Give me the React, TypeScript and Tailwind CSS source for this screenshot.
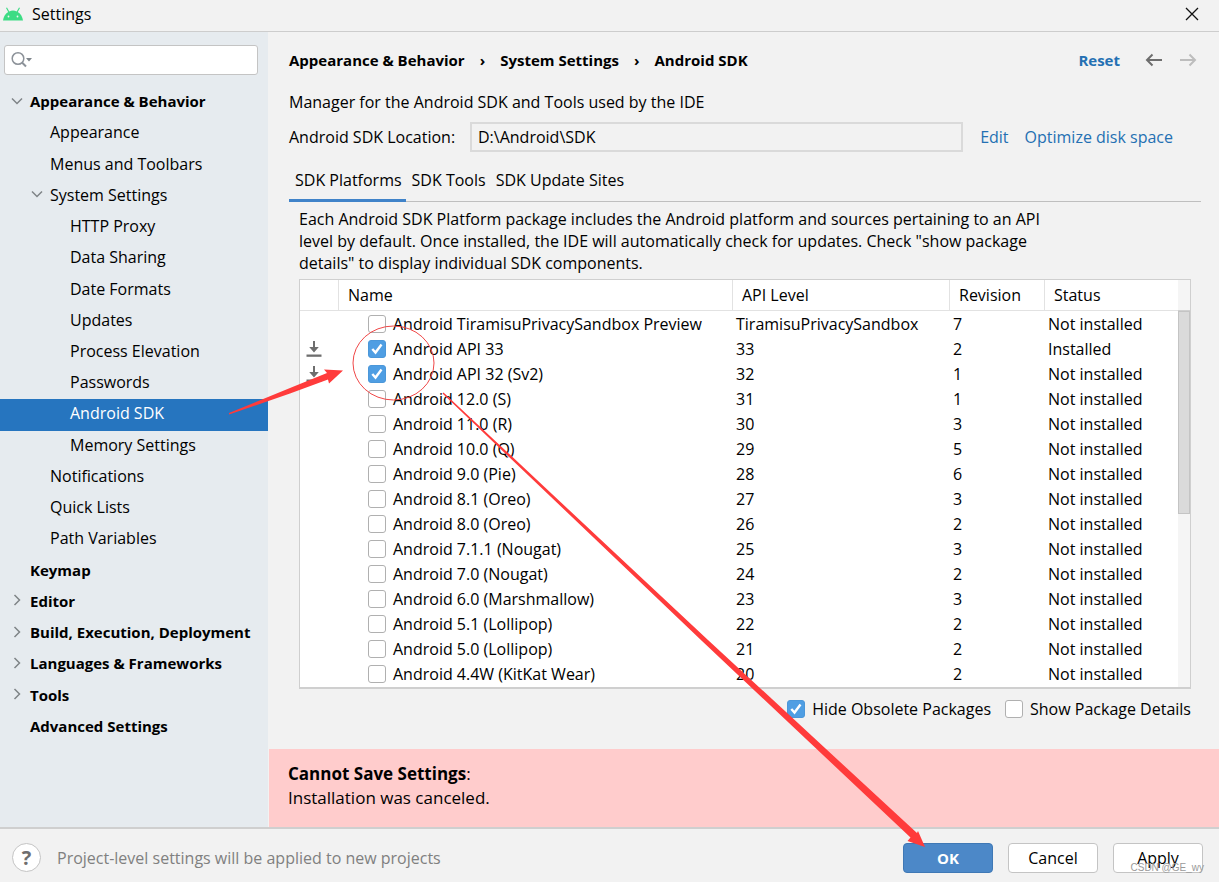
import { useState } from 'react';
import clsx from 'clsx';

interface TreeNode {
    label: string;
    level: 0 | 1 | 2;
    state?: 'open' | 'closed';
}

interface SdkPackage {
    name: string;
    api: string;
    revision: number;
    status: string;
    checked?: boolean;
}

const TREE: TreeNode[] = [
    { label: 'Appearance & Behavior', level: 0, state: 'open' },
    { label: 'Appearance', level: 1 },
    { label: 'Menus and Toolbars', level: 1 },
    { label: 'System Settings', level: 1, state: 'open' },
    { label: 'HTTP Proxy', level: 2 },
    { label: 'Data Sharing', level: 2 },
    { label: 'Date Formats', level: 2 },
    { label: 'Updates', level: 2 },
    { label: 'Process Elevation', level: 2 },
    { label: 'Passwords', level: 2 },
    { label: 'Android SDK', level: 2 },
    { label: 'Memory Settings', level: 2 },
    { label: 'Notifications', level: 1 },
    { label: 'Quick Lists', level: 1 },
    { label: 'Path Variables', level: 1 },
    { label: 'Keymap', level: 0 },
    { label: 'Editor', level: 0, state: 'closed' },
    { label: 'Build, Execution, Deployment', level: 0, state: 'closed' },
    { label: 'Languages & Frameworks', level: 0, state: 'closed' },
    { label: 'Tools', level: 0, state: 'closed' },
    { label: 'Advanced Settings', level: 0 },
];

const PACKAGES: SdkPackage[] = [
    { name: 'Android TiramisuPrivacySandbox Preview', api: 'TiramisuPrivacySandbox', revision: 7, status: 'Not installed' },
    { name: 'Android API 33', api: '33', revision: 2, status: 'Installed', checked: true },
    { name: 'Android API 32 (Sv2)', api: '32', revision: 1, status: 'Not installed', checked: true },
    { name: 'Android 12.0 (S)', api: '31', revision: 1, status: 'Not installed' },
    { name: 'Android 11.0 (R)', api: '30', revision: 3, status: 'Not installed' },
    { name: 'Android 10.0 (Q)', api: '29', revision: 5, status: 'Not installed' },
    { name: 'Android 9.0 (Pie)', api: '28', revision: 6, status: 'Not installed' },
    { name: 'Android 8.1 (Oreo)', api: '27', revision: 3, status: 'Not installed' },
    { name: 'Android 8.0 (Oreo)', api: '26', revision: 2, status: 'Not installed' },
    { name: 'Android 7.1.1 (Nougat)', api: '25', revision: 3, status: 'Not installed' },
    { name: 'Android 7.0 (Nougat)', api: '24', revision: 2, status: 'Not installed' },
    { name: 'Android 6.0 (Marshmallow)', api: '23', revision: 3, status: 'Not installed' },
    { name: 'Android 5.1 (Lollipop)', api: '22', revision: 2, status: 'Not installed' },
    { name: 'Android 5.0 (Lollipop)', api: '21', revision: 2, status: 'Not installed' },
    { name: 'Android 4.4W (KitKat Wear)', api: '20', revision: 2, status: 'Not installed' },
];

const TABS = ['SDK Platforms', 'SDK Tools', 'SDK Update Sites'];

const INDENT = ['pl-[30px]', 'pl-[50px]', 'pl-[70px]'];
const CHEVRON_LEFT = ['left-[10px]', 'left-[30px]', 'left-[50px]'];

const AndroidLogo = () => (
    <svg width="20" height="14" viewBox="0 0 20 14" aria-hidden="true">
        <path d="M0 13.5C.4 9.700 2.300 6.600 5.200 4.900L3 1l1-.6 2.300 4C7.500 3.900 8.700 3.600 10 3.600s2.500.3 3.700.8l2.300-4 1 .6-2.200 3.900c2.900 1.700 4.800 4.800 5.200 8.600z" fill="#3ddc84" />
        <circle cx="5.500" cy="9.500" r=".9" fill="#f2f2f2" />
        <circle cx="14.500" cy="9.500" r=".9" fill="#f2f2f2" />
    </svg>
);

const Chevron = ({ open }: { open: boolean }) => (
    <svg width="14" height="14" viewBox="0 0 14 14" fill="none" stroke="#7f8487" strokeWidth="1.500" aria-hidden="true">
        <path d={open ? 'M2 4.500l5 5 5-5' : 'M4.500 2l5 5-5 5'} />
    </svg>
);

const CheckBox = ({ label, defaultChecked, className }: { label: string, defaultChecked?: boolean, className?: string }) => (
    <label className={clsx('flex items-center', className)}>
        <span className="relative size-[18px] shrink-0">
            <input
                type="checkbox"
                defaultChecked={defaultChecked}
                className="peer block size-[18px] appearance-none rounded-[3px] border border-[#b0b0b0] bg-white checked:border-[#4b97d9] checked:bg-[#4f9ee3]"
            />
            <svg className="pointer-events-none absolute inset-0 hidden peer-checked:block" width="18" height="18" viewBox="0 0 18 18" fill="none" stroke="#fff" strokeWidth="2.400" aria-hidden="true">
                <path d="M4.300 9l3.200 3.500L13.500 4.500" />
            </svg>
        </span>
        <span className="whitespace-nowrap">{label}</span>
    </label>
);

const DownloadIcon = () => (
    <svg className="ml-[6px]" width="16" height="17" viewBox="0 0 16 17" fill="#6e6e6e" aria-hidden="true">
        <path d="M7 1h2v6h3.800L8 12.500 3.200 7H7z" />
        <path d="M.5 14.500h15v2.300H.5z" />
    </svg>
);

// Red marker drawn over the dialog: circle plus two arrows
const Annotations = () => (
    <svg className="pointer-events-none absolute top-0 left-0" width="1219" height="882" viewBox="0 0 1219 882" fill="#ff3b3b" aria-hidden="true">
        <ellipse cx="393.500" cy="363" rx="40.500" ry="37" fill="none" stroke="#f04848" />
        <path d="M229 413l61-25 37-15-3-3.500 19 1-14 13-1-4-38 14-61 21z" />
        <path d="M442.500 393.500l1-1L708 640l209 193 1-2 7 16-17.500-6 3-3.500L702 641z" />
    </svg>
);

function Sidebar() {
    const [selected, setSelected] = useState('Android SDK');

    return (
        <aside className="w-[268px] shrink-0 bg-[#e6ebef] pt-[13px]">
            <div className="relative mr-[10px] ml-1">
                <input
                    type="text"
                    aria-label="Search settings"
                    className="block h-[30px] w-full rounded-[3px] border border-[#c4c4c4] bg-white pr-2 pl-8 outline-none"
                />
                <svg className="pointer-events-none absolute top-[6px] left-[7px]" width="22" height="18" viewBox="0 0 22 18" fill="none" stroke="#8c9299" aria-hidden="true">
                    <circle cx="7" cy="7.500" r="5.800" strokeWidth="1.500" />
                    <path d="M11 11.500l4 4" strokeWidth="2" />
                    <path d="M15 7h6l-3 3.500z" fill="#7f868c" stroke="none" />
                </svg>
            </div>
            <ul className="mt-3 flex h-[656px] flex-col">
                {TREE.map(node => (
                    <li key={node.label} className="relative flex flex-1">
                        {node.state && (
                            <span className={clsx('pointer-events-none absolute inset-y-0 flex items-center pb-1', CHEVRON_LEFT[node.level])}>
                                <Chevron open={node.state === 'open'} />
                            </span>
                        )}
                        <button
                            type="button"
                            onClick={() => setSelected(node.label)}
                            className={clsx(
                                'w-full pb-[3px] text-left whitespace-nowrap',
                                INDENT[node.level],
                                node.level === 0 && 'text-[15px] font-bold',
                                selected === node.label && 'bg-[#2675bf] text-white'
                            )}
                        >
                            {node.label}
                        </button>
                    </li>
                ))}
            </ul>
        </aside>
    );
}

function PackageTable() {
    return (
        <div className="mx-[10px] flex border border-b-2 border-[#cfcfcf] bg-white">
            <table className="mb-px flex-1 table-fixed border-separate border-spacing-0 text-left">
                <colgroup>
                    <col className="w-[39px]" />
                    <col />
                    <col className="w-[217px]" />
                    <col className="w-[95px]" />
                    <col className="w-[133px]" />
                </colgroup>
                <thead>
                    <tr className="h-[31px]">
                        <th className="border-r border-b border-[#e2e2e2] p-0" aria-label="Pending"></th>
                        <th className="border-r border-b border-[#e2e2e2] p-0 pl-[9px] font-normal">Name</th>
                        <th className="border-r border-b border-[#e2e2e2] p-0 pl-[9px] font-normal">API Level</th>
                        <th className="border-r border-b border-[#e2e2e2] p-0 pl-[9px] font-normal">Revision</th>
                        <th className="border-b border-[#e2e2e2] p-0 pl-[9px] font-normal">Status</th>
                    </tr>
                </thead>
                <tbody>
                    {PACKAGES.map(p => (
                        <tr key={p.name} className="h-[25px]">
                            <td className="p-0">{p.checked && <DownloadIcon />}</td>
                            <td className="p-0"><CheckBox label={p.name} defaultChecked={p.checked} className="gap-[7px] pl-[29px]" /></td>
                            <td className="p-0 pl-[3px]">{p.api}</td>
                            <td className="p-0 pl-[3px]">{p.revision}</td>
                            <td className="p-0 pl-[3px]">{p.status}</td>
                        </tr>
                    ))}
                </tbody>
            </table>
            <div className="flex w-3 flex-col bg-[#f5f5f5]">
                <div className="h-[31px] border-b border-[#d0d0d0]"></div>
                <div className="h-[203px] border border-[#c4c4c4] bg-[#dadada]"></div>
            </div>
        </div>
    );
}

function App() {
    const [tab, setTab] = useState(TABS[0]);

    return (
        <div className="relative flex min-h-screen flex-col bg-[#f2f2f2] font-['Open_Sans',sans-serif] text-[16px] leading-[22px] text-black">
            <header className="flex h-8 items-center border-b border-[#cdcdcd] pr-5 pb-[3px] pl-[3px]">
                <AndroidLogo />
                <h1 className="ml-[9px]">Settings</h1>
                <button type="button" aria-label="Close" className="ml-auto">
                    <svg width="14" height="14" viewBox="0 0 14 14" stroke="#111" strokeWidth="1.300" aria-hidden="true">
                        <path d="M1 1l12 12M13 1L1 13" />
                    </svg>
                </button>
            </header>

            <div className="flex flex-1">
                <Sidebar />

                <main className="flex min-w-0 flex-1 flex-col pl-px">
                    <div className="pr-[18px] pl-5">
                        <div className="mt-[17px] flex items-center text-[15px] leading-[22px] font-bold">
                            <nav className="flex gap-[15px]" aria-label="Breadcrumb">
                                <span>Appearance &amp; Behavior</span>
                                <span>›</span>
                                <span>System Settings</span>
                                <span>›</span>
                                <span>Android SDK</span>
                            </nav>
                            <a href="#reset" className="ml-auto text-[#2470b3]">Reset</a>
                            <button type="button" aria-label="Back" className="ml-[25px]">
                                <svg width="18" height="14" viewBox="0 0 18 14" fill="none" stroke="#6e6e6e" strokeWidth="2" aria-hidden="true">
                                    <path d="M17 7H2M7.500 1.500L2 7l5.500 5.500" />
                                </svg>
                            </button>
                            <button type="button" aria-label="Forward" className="mr-1 ml-4">
                                <svg width="18" height="14" viewBox="0 0 18 14" fill="none" stroke="#bdbdbd" strokeWidth="2" aria-hidden="true">
                                    <path d="M1 7h15M10.500 1.500L16 7l-5.500 5.500" />
                                </svg>
                            </button>
                        </div>

                        <p className="mt-5">Manager for the Android SDK and Tools used by the IDE</p>

                        <div className="mt-[9px] flex items-center">
                            <label htmlFor="sdk-location" className="w-[181px] shrink-0">Android SDK Location:</label>
                            <input
                                id="sdk-location"
                                type="text"
                                readOnly
                                value="D:\Android\SDK"
                                className="h-[30px] min-w-0 flex-1 border-2 border-[#dadada] bg-[#f2f2f2] px-[6px] outline-none"
                            />
                            <a href="#edit" className="ml-[17px] text-[#2470b3]">Edit</a>
                            <a href="#optimize" className="mr-7 ml-4 text-[#2470b3]">Optimize disk space</a>
                        </div>

                        <div className="mt-4 flex h-[34px] border-b border-[#bfbfbf]" role="tablist">
                            {TABS.map(t => (
                                <button
                                    key={t}
                                    type="button"
                                    role="tab"
                                    aria-selected={t === tab}
                                    onClick={() => setTab(t)}
                                    className={clsx(
                                        '-mb-px border-b-[3px] pr-1 pb-[7px] pl-[6px]',
                                        t === tab ? 'border-[#4083c9]' : 'border-transparent'
                                    )}
                                >
                                    {t}
                                </button>
                            ))}
                        </div>

                        <p className="mt-[6px] mb-[5px] ml-[10px] max-w-[750px]">
                            Each Android SDK Platform package includes the Android platform and sources pertaining to an API level by default. Once installed, the IDE will automatically check for updates. Check "show package details" to display individual SDK components.
                        </p>

                        <PackageTable />

                        <div className="mt-[9px] mr-[10px] flex justify-end gap-[14px]">
                            <CheckBox label="Hide Obsolete Packages" defaultChecked className="gap-[7px]" />
                            <CheckBox label="Show Package Details" className="gap-[7px]" />
                        </div>
                    </div>

                    <div className="mt-auto h-[78px] bg-[#ffcccc] px-[19px] pt-[13px] text-[17px] leading-6" role="alert">
                        <p><strong>Cannot Save Settings</strong>:</p>
                        <p>Installation was canceled.</p>
                    </div>
                </main>
            </div>

            <footer className="flex h-[55px] items-center border-t-2 border-[#cfcfcf] pt-1 pr-4 pl-3">
                <button type="button" aria-label="Help" className="flex size-[29px] items-center justify-center rounded-full border border-[#c4c4c4] bg-white text-xl font-bold text-[#6e6e6e]">
                    ?
                </button>
                <p className="ml-4 text-[#808080]">Project-level settings will be applied to new projects</p>
                <div className="ml-auto flex gap-[15px]">
                    <button type="button" className="h-[30px] w-[90px] rounded border border-[#3f78b5] bg-[#4c88c8] text-[15px] font-bold text-white">OK</button>
                    <button type="button" className="h-[30px] w-[90px] rounded border border-[#c4c4c4] bg-white">Cancel</button>
                    <button type="button" className="h-[30px] w-[90px] rounded border border-[#c4c4c4] bg-white">Apply</button>
                </div>
            </footer>

            <Annotations />
            <span className="pointer-events-none absolute right-[15px] bottom-[7px] font-['Liberation_Sans',sans-serif] text-[10px] leading-[14px] text-[#9a9a9a]">CSDN @GE_wy</span>
        </div>
    );
}

export default App;
